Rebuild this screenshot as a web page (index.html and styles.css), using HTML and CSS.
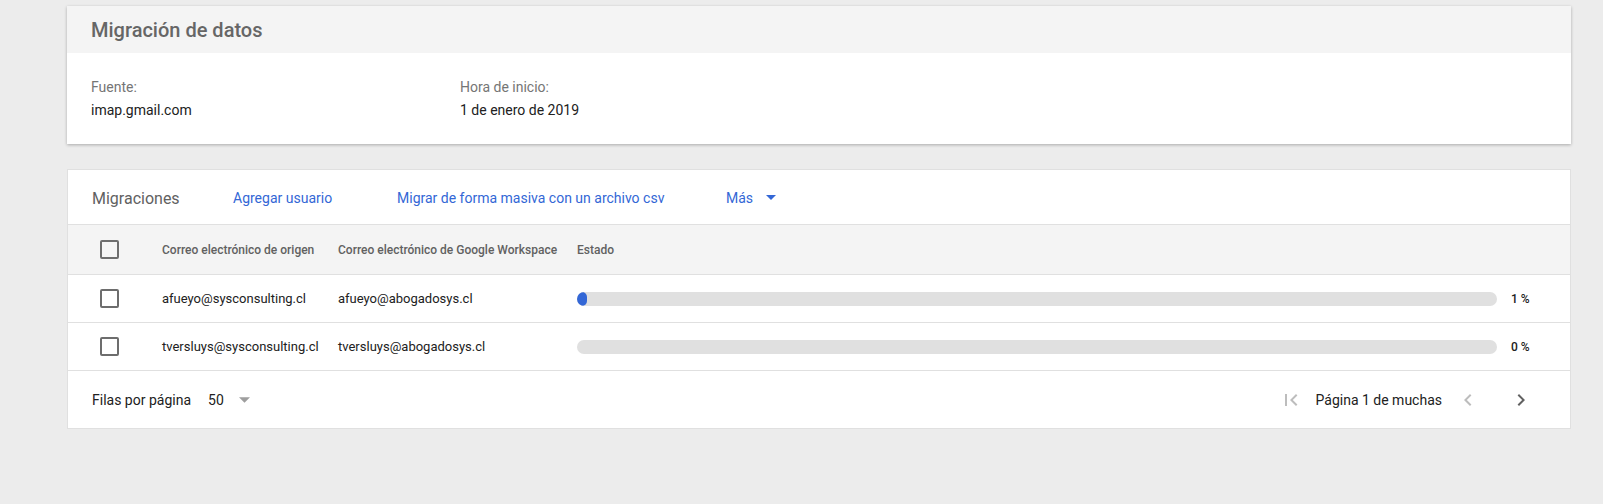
FILE: index.html
```html
<!DOCTYPE html>
<html lang="es">
<head>
<meta charset="utf-8">
<title>Migración de datos</title>
<link rel="stylesheet" href="styles.css">
</head>
<body>
<div class="page">
  <section class="card summary">
    <div class="summary-head">Migración de datos</div>
    <div class="summary-body">
      <div class="field">
        <div class="field-label">Fuente:</div>
        <div class="field-value">imap.gmail.com</div>
      </div>
      <div class="field">
        <div class="field-label">Hora de inicio:</div>
        <div class="field-value">1 de enero de 2019</div>
      </div>
    </div>
  </section>

  <section class="card table-card">
    <div class="toolbar">
      <div class="toolbar-title">Migraciones</div>
      <a class="toolbar-link">Agregar usuario</a>
      <a class="toolbar-link">Migrar de forma masiva con un archivo csv</a>
      <a class="toolbar-link more">Más
        <svg class="caret" width="10" height="5" viewBox="0 0 10 5"><path d="M0 0l5 5 5-5z" fill="#3367d6"/></svg>
      </a>
    </div>
    <div class="row head-row">
      <div class="cell check-cell"><span class="checkbox"></span></div>
      <div class="cell">Correo electrónico de origen</div>
      <div class="cell">Correo electrónico de Google Workspace</div>
      <div class="cell">Estado</div>
      <div class="cell"></div>
    </div>
    <div class="row data-row">
      <div class="cell check-cell"><span class="checkbox"></span></div>
      <div class="cell">afueyo@sysconsulting.cl</div>
      <div class="cell">afueyo@abogadosys.cl</div>
      <div class="cell"><div class="bar"><div class="bar-fill" style="width:10px"></div></div></div>
      <div class="cell pct">1 %</div>
    </div>
    <div class="row data-row">
      <div class="cell check-cell"><span class="checkbox"></span></div>
      <div class="cell">tversluys@sysconsulting.cl</div>
      <div class="cell">tversluys@abogadosys.cl</div>
      <div class="cell"><div class="bar"></div></div>
      <div class="cell pct">0 %</div>
    </div>
    <div class="footer">
      <div class="rows-per-page">
        <span>Filas por página</span>
        <span class="rpp-value">50</span>
        <svg class="rpp-caret" width="11" height="6" viewBox="0 0 10 5"><path d="M0 0l5 5 5-5z" fill="#9e9e9e"/></svg>
      </div>
      <div class="pager">
        <svg class="pager-btn" width="24" height="24" viewBox="0 0 24 24"><path d="M18.41 16.59L13.82 12l4.59-4.59L17 6l-6 6 6 6zM6 6h2v12H6z" fill="#bdbdbd"/></svg>
        <span class="pager-text">Página 1 de muchas</span>
        <svg class="pager-btn prev" width="24" height="24" viewBox="0 0 24 24"><path d="M15.41 7.41L14 6l-6 6 6 6 1.41-1.41L10.83 12z" fill="#bdbdbd"/></svg>
        <svg class="pager-btn next" width="24" height="24" viewBox="0 0 24 24"><path d="M10 6L8.59 7.41 13.17 12l-4.58 4.59L10 18l6-6z" fill="#616161"/></svg>
      </div>
    </div>
  </section>
</div>
</body>
</html>
```

FILE: styles.css
```css
html, body {
  margin: 0;
  padding: 0;
  background: #ececec;
  font-family: Roboto, "Noto Sans", Arial, sans-serif;
  color: #212121;
}

.page {
  padding: 6px 0 0 67px;
  width: 1504px;
}

.card {
  background: #fff;
  box-sizing: border-box;
}

.summary {
  width: 1504px;
  box-shadow: 0 1px 3px rgba(0, 0, 0, 0.28);
}

.summary-head {
  height: 47px;
  background: #f4f4f4;
  padding-left: 24px;
  display: flex;
  align-items: center;
  font-size: 20px;
  font-weight: 500;
  color: #666;
}

.summary-body {
  display: grid;
  grid-template-columns: 369px 1fr;
  padding: 24px;
  height: 91px;
  box-sizing: border-box;
}

.field-label {
  font-size: 14px;
  line-height: 20px;
  color: #757575;
}

.field-value {
  font-size: 14px;
  line-height: 20px;
  margin-top: 3px;
  color: #212121;
}

.table-card {
  margin-top: 25px;
  width: 1504px;
  border: 1px solid #e0e0e0;
}

.toolbar {
  height: 54px;
  border-bottom: 1px solid #e0e0e0;
  display: grid;
  grid-template-columns: 141px 164px 329px auto;
  align-items: center;
  padding-left: 24px;
}

.toolbar-title {
  font-size: 16px;
  color: #616161;
  padding-top: 2px;
}

.toolbar-link {
  font-size: 14px;
  color: #3367d6;
  text-decoration: none;
  padding-top: 1px;
}

.more {
  display: flex;
  align-items: center;
}

.caret {
  margin-left: 13px;
}

.row {
  display: grid;
  grid-template-columns: 94px 176px 239px 920px auto;
  align-items: center;
  border-bottom: 1px solid #e0e0e0;
}

.head-row {
  height: 49px;
  background: #f4f4f4;
  font-size: 12px;
  font-weight: 500;
  color: #616161;
}

.data-row {
  height: 47px;
  font-size: 13px;
  color: #212121;
}

.check-cell {
  padding-left: 32px;
  display: flex;
  align-items: center;
}

.checkbox {
  display: block;
  width: 19px;
  height: 19px;
  box-sizing: border-box;
  border: 2px solid #6d6d6d;
  border-radius: 2px;
}

.bar {
  height: 14px;
  border-radius: 7px;
  background: #e0e0e0;
  overflow: hidden;
}

.bar-fill {
  height: 14px;
  border-radius: 7px;
  background: #3367d6;
}

.pct {
  padding-left: 14px;
  font-size: 12px;
  font-weight: 500;
}

.footer {
  height: 57px;
  display: flex;
  align-items: center;
  justify-content: space-between;
  padding-left: 24px;
  padding-right: 37px;
  font-size: 14px;
  color: #212121;
}

.rows-per-page {
  display: flex;
  align-items: center;
}

.rpp-value {
  margin-left: 17px;
}

.rpp-caret {
  margin-left: 15px;
}

.pager {
  display: flex;
  align-items: center;
}

.pager-btn {
  display: block;
}

.pager-text {
  margin-left: 13px;
}

.prev {
  margin-left: 14px;
}

.next {
  margin-left: 29px;
}
```
